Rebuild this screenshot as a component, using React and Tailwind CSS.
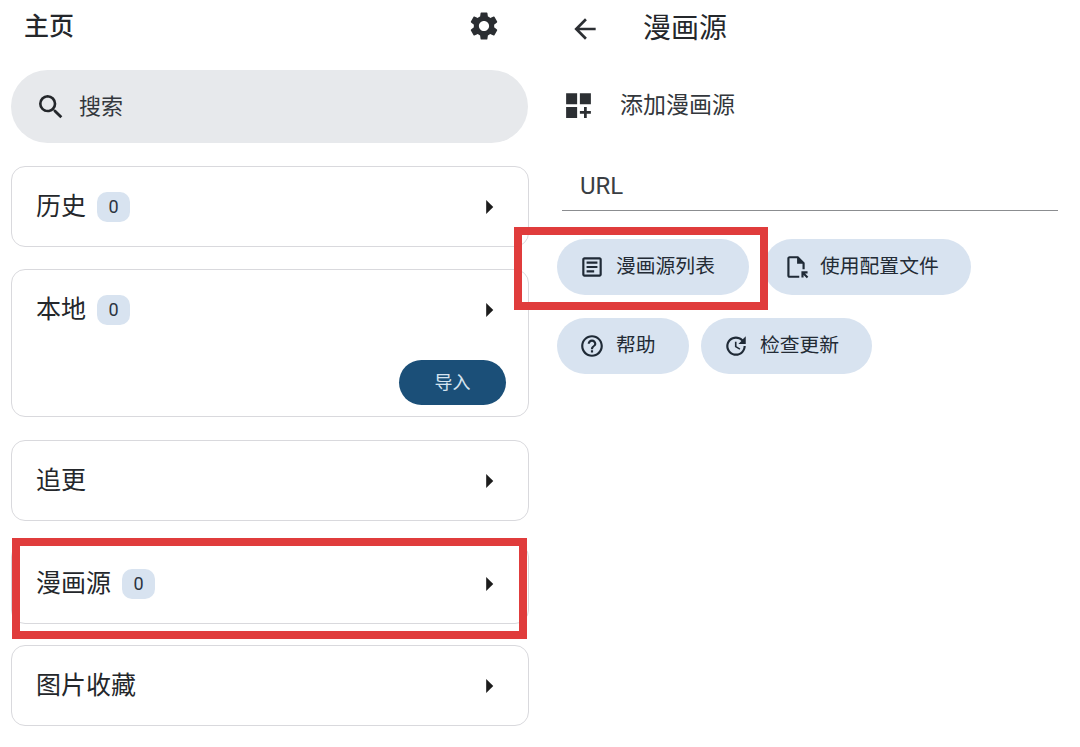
import React from 'react';
import {
  MdSettings, MdSearch, MdArrowRight, MdArrowBack, MdDashboardCustomize,
  MdOutlineArticle, MdOutlineFileOpen, MdOutlineHelpOutline, MdUpdate,
} from 'react-icons/md';

const font = { fontFamily: '"Roboto", "Noto Sans CJK SC", sans-serif' };

function Card({ title, count, tall, mt = 'mt-[23px]' }) {
  return (
    <div className={`${mt} ${tall ? 'h-[148px]' : 'h-[81px]'} rounded-[14px] border border-[#d9d9dd] bg-white pl-[24px] pr-[23px]`}>
      <div className="flex h-[79px] items-center">
        <span className="text-[25px] leading-none text-[#24272b]">{title}</span>
        {count !== undefined && (
          <span className="ml-[11px] flex h-[30px] w-[33px] items-center justify-center rounded-[10px] bg-[#d8e3f0] text-[18px] text-[#2c3440]">{count}</span>
        )}
        <MdArrowRight className="ml-auto -mr-[1px] text-[#1c1c1c]" size={34} />
      </div>
      {tall && (
        <div className="mt-[11px] -mr-[1px] flex justify-end">
          <button className="h-[45px] w-[107px] rounded-full bg-[#1b4f78] text-[18px] text-[#d5e4f0]">导入</button>
        </div>
      )}
    </div>
  );
}

function Chip({ icon: Icon, label, w, pl = 'pl-[22px]' }) {
  return (
    <button className={`${w} ${pl} flex h-[56px] items-center gap-[11px] rounded-full bg-[#d8e3f0] text-[19.8px] text-[#232b35]`}>
      <Icon size={26} className="text-[#1f2a36]" />
      <span>{label}</span>
    </button>
  );
}

export default function App() {
  return (
    <div className="relative flex h-[747px] w-[1080px] overflow-hidden bg-white" style={font}>
      {/* left: home */}
      <div className="w-[540px] shrink-0 px-[11px]">
        <div className="flex h-[52px] items-center justify-between pl-[13px] pr-[28px]">
          <span className="text-[25px] font-medium leading-none text-[#24272b]">主页</span>
          <MdSettings size={34} className="text-[#2a2d31]" />
        </div>
        <div className="mt-[18px] flex h-[73px] w-[517px] items-center rounded-full bg-[#e7e9ec] pl-[24px]">
          <MdSearch size={32} className="text-[#24272b]" />
          <span className="ml-[12px] text-[22px] text-[#33373c]">搜索</span>
        </div>
        <div className="w-[518px]">
          <Card title="历史" count={0} />
          <Card title="本地" count={0} tall mt="mt-[22px]" />
          <Card title="追更" />
          <Card title="漫画源" count={0} mt="mt-[22px]" />
          <Card title="图片收藏" mt="mt-[21px]" />
        </div>
      </div>

      {/* right: comic source */}
      <div className="flex-1 pl-[22px]">
        <div className="flex h-[58px] items-center">
          <MdArrowBack size={32} className="ml-[7px] text-[#2c2f33]" />
          <span className="ml-[42px] text-[28px] leading-none text-[#24272b]">漫画源</span>
        </div>
        <div className="mt-[18px] flex h-[58px] items-center">
          <MdDashboardCustomize size={33} className="text-[#2c2f33]" />
          <span className="ml-[25px] text-[23px] leading-none text-[#33373c]">添加漫画源</span>
        </div>
        <div className="mt-[36px] h-[41px] w-[496px] border-b border-[#8b8d90] pl-[18px] text-[24px] leading-[32px] text-[#3a3e43]">URL</div>
        <div className="-ml-[5px] mt-[28px] flex gap-[15px]">
          <Chip icon={MdOutlineArticle} label="漫画源列表" w="w-[192px]" />
          <Chip icon={MdOutlineFileOpen} label="使用配置文件" w="w-[207px]" pl="pl-[19px]" />
        </div>
        <div className="-ml-[5px] mt-[23px] flex gap-[12px]">
          <Chip icon={MdOutlineHelpOutline} label="帮助" w="w-[132px]" />
          <Chip icon={MdUpdate} label="检查更新" w="w-[171px]" />
        </div>
      </div>

      {/* red annotation boxes */}
      <div className="pointer-events-none absolute left-[12px] top-[538px] h-[101px] w-[515px] border-[8px] border-[#e03c3c]" />
      <div className="pointer-events-none absolute left-[514px] top-[227px] h-[83px] w-[254px] border-[8px] border-[#e03c3c]" />
    </div>
  );
}
